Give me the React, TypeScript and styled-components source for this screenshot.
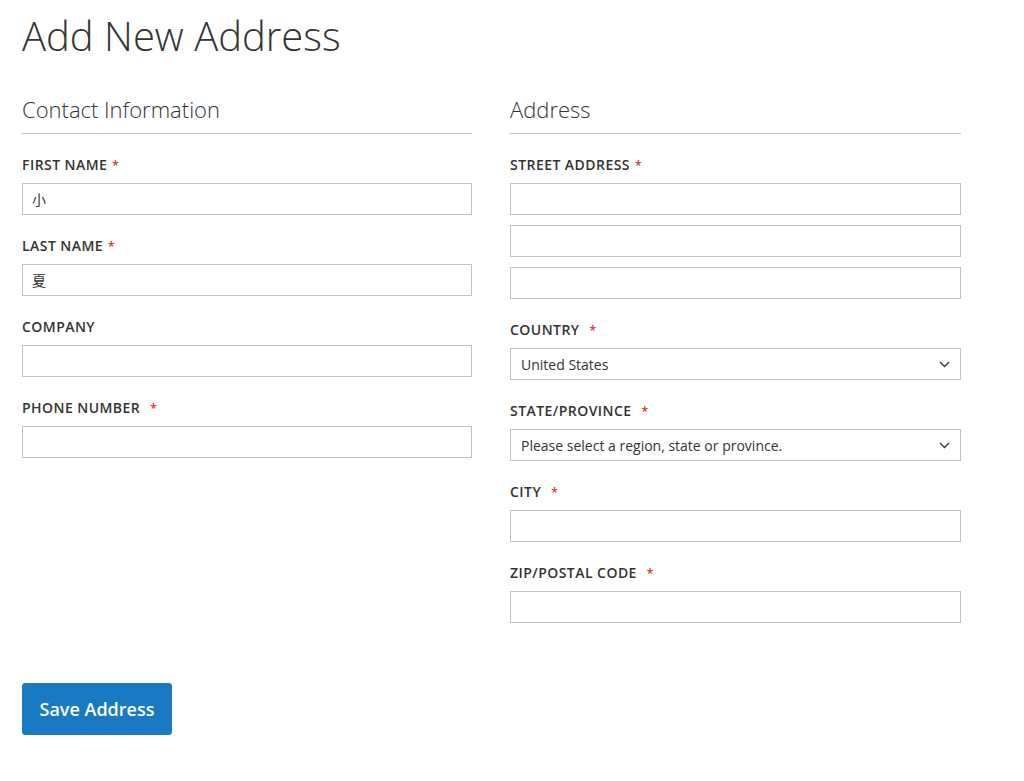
import React from "react";
import styled, { createGlobalStyle } from "styled-components";

const Global = createGlobalStyle`
  html, body { margin: 0; padding: 0; background: #fff; }
  body { font-family: "Open Sans", "Noto Sans CJK SC", sans-serif; color: #333; }
  * { box-sizing: border-box; }
`;

const Page = styled.div`
  padding: 14px 0 40px 22px;
  width: 961px;
`;

const Title = styled.h1`
  margin: 0;
  font-size: 40px;
  line-height: 44px;
  font-weight: 300;
  color: #333;
`;

const Columns = styled.div`
  display: grid;
  grid-template-columns: 450px 451px;
  column-gap: 38px;
  margin-top: 38px;
`;

const Fieldset = styled.div`
  display: flex;
  flex-direction: column;
`;

const Legend = styled.div`
  font-size: 22px;
  line-height: 26px;
  font-weight: 300;
  color: #333;
  padding-bottom: 11px;
  border-bottom: 1px solid #c6c6c6;
  margin-bottom: 21px;
`;

const Field = styled.div`
  display: flex;
  flex-direction: column;
  margin-bottom: 21px;
`;

const Label = styled.label`
  display: block;
  height: 19px;
  font-size: 14px;
  line-height: 19px;
  font-weight: 600;
  letter-spacing: 0.45px;
  text-transform: uppercase;
  color: #333;
  margin-bottom: 9px;
`;

const Star = styled.span<{ $gap: number }>`
  color: #e02b27;
  font-size: 12px;
  line-height: 0;
  margin-left: ${(p) => p.$gap}px;
`;

const Inputs = styled.div`
  display: flex;
  flex-direction: column;
  gap: 10px;
`;

const Input = styled.div`
  height: 32px;
  border: 1px solid #c2c2c2;
  background: #fff;
  padding: 0 9px;
  display: flex;
  align-items: center;
  font-size: 14px;
  font-family: "Open Sans", "Noto Sans CJK SC", sans-serif;
  color: #333;
`;

const Select = styled(Input)`
  justify-content: space-between;
  padding: 0 10px 0 10px;
`;

const Actions = styled.div`
  margin-top: 39px;
`;

const Button = styled.button`
  width: 150px;
  height: 52px;
  background: #1979c3;
  border: 1px solid #1979c3;
  border-radius: 3px;
  color: #fff;
  font-family: "Open Sans", sans-serif;
  font-weight: 600;
  font-size: 18px;
  padding: 0;
  cursor: pointer;
`;

const Chevron = () => (
  <svg width="11" height="7" viewBox="0 0 11 7">
    <path d="M1 1 L5.5 5.5 L10 1" fill="none" stroke="#333" strokeWidth="1.3" />
  </svg>
);

const TextField = ({ label, gap = 5, required = true, value = "" }: { label: string; gap?: number; required?: boolean; value?: string }) => (
  <Field>
    <Label>
      {label}
      {required && <Star $gap={gap}>*</Star>}
    </Label>
    <Input>{value}</Input>
  </Field>
);

const SelectField = ({ label, value }: { label: string; value: string }) => (
  <Field>
    <Label>
      {label}
      <Star $gap={10}>*</Star>
    </Label>
    <Select>
      <span>{value}</span>
      <Chevron />
    </Select>
  </Field>
);

export default function App() {
  return (
    <>
      <Global />
      <Page>
        <Title>Add New Address</Title>
        <Columns>
          <Fieldset>
            <Legend>Contact Information</Legend>
            <TextField label="First Name" value="小" />
            <TextField label="Last Name" value="夏" />
            <TextField label="Company" required={false} />
            <TextField label="Phone Number" gap={10} />
          </Fieldset>
          <Fieldset>
            <Legend>Address</Legend>
            <Field>
              <Label>
                Street Address<Star $gap={5}>*</Star>
              </Label>
              <Inputs>
                <Input />
                <Input />
                <Input />
              </Inputs>
            </Field>
            <SelectField label="Country" value="United States" />
            <SelectField label="State/Province" value="Please select a region, state or province." />
            <TextField label="City" gap={10} />
            <TextField label="Zip/Postal Code" gap={10} />
          </Fieldset>
        </Columns>
        <Actions>
          <Button>Save Address</Button>
        </Actions>
      </Page>
    </>
  );
}
